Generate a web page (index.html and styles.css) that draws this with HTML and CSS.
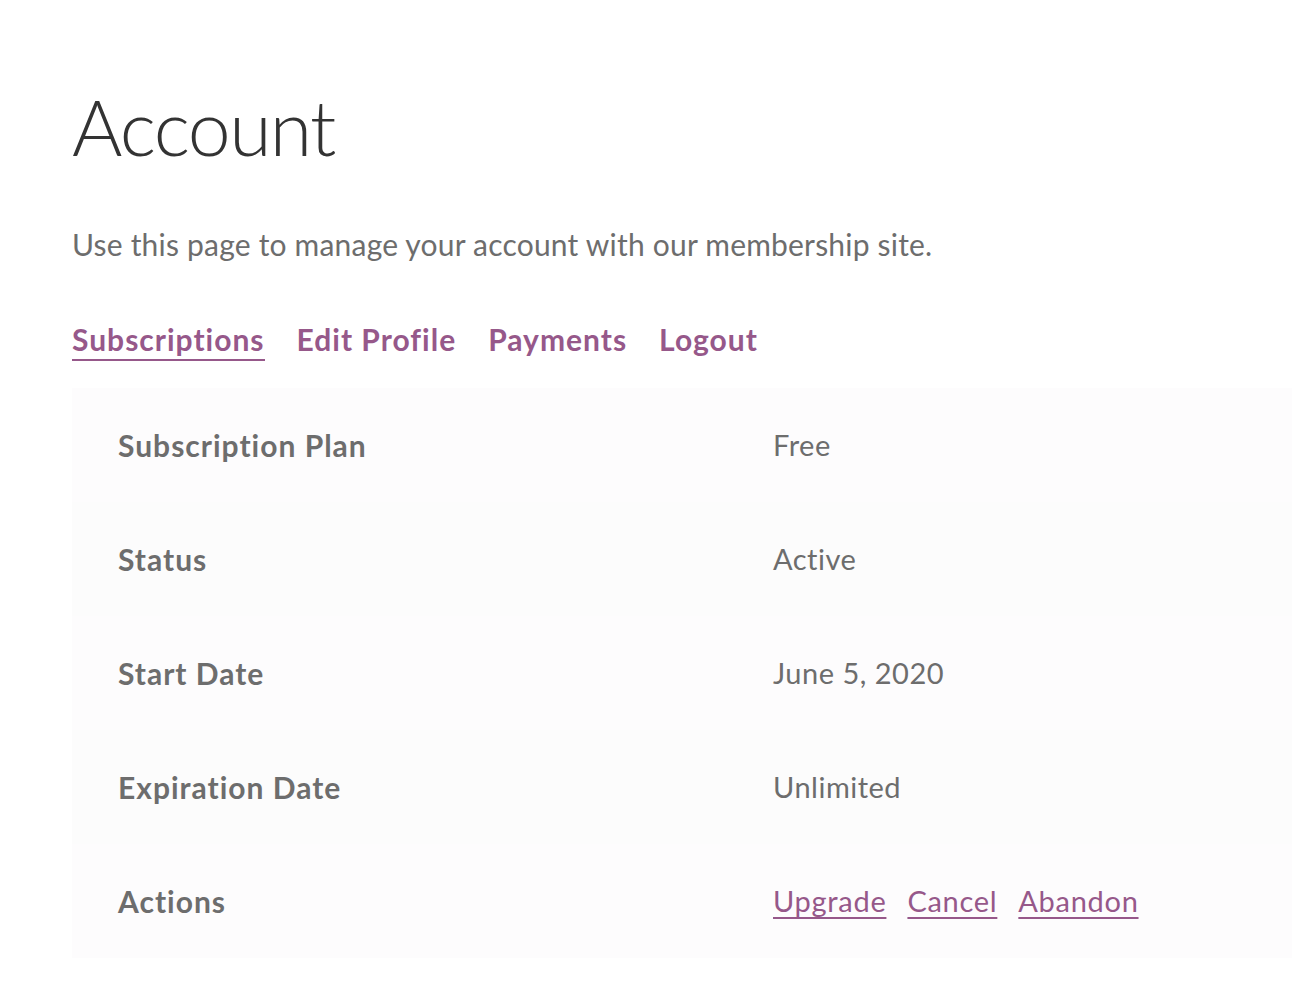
FILE: index.html
```html
<!DOCTYPE html>
<html lang="en">
<head>
<meta charset="utf-8">
<title>Account</title>
<link rel="stylesheet" href="styles.css">
</head>
<body>
<main class="page">
  <h1 class="title">Account</h1>
  <p class="intro">Use this page to manage your account with our membership site.</p>
  <nav class="tabs">
    <a class="tab active" href="#">Subscriptions</a>
    <a class="tab" href="#">Edit Profile</a>
    <a class="tab" href="#">Payments</a>
    <a class="tab" href="#">Logout</a>
  </nav>
  <table class="subs">
    <colgroup><col class="col-label"><col class="col-value"></colgroup>
    <tbody>
      <tr><th>Subscription Plan</th><td>Free</td></tr>
      <tr><th>Status</th><td>Active</td></tr>
      <tr><th>Start Date</th><td>June 5, 2020</td></tr>
      <tr><th>Expiration Date</th><td>Unlimited</td></tr>
      <tr><th>Actions</th><td class="actions"><a href="#">Upgrade</a><a href="#">Cancel</a><a href="#">Abandon</a></td></tr>
    </tbody>
  </table>
</main>
</body>
</html>
```

FILE: styles.css
```css
html, body {
  margin: 0;
  padding: 0;
  background: #ffffff;
  overflow-x: hidden;
}
body {
  font-family: Lato, "Liberation Sans", sans-serif;
  color: #6d6d6d;
}
.page {
  padding: 82px 0 0 72px;
}
.title {
  margin: 0;
  font-size: 77px;
  font-weight: 300;
  line-height: 88px;
  color: #333333;
  letter-spacing: -1.6px;
}
.intro {
  margin: 54px 0 0;
  font-size: 30px;
  line-height: 40px;
  letter-spacing: 0.2px;
  color: #6d6d6d;
}
.tabs {
  display: flex;
  gap: 32px;
  margin-top: 55px;
}
.tab {
  font-size: 30px;
  font-weight: 700;
  line-height: 40px;
  letter-spacing: 1px;
  color: #96588a;
  text-decoration: none;
  padding-bottom: 0;
  border-bottom: 2px solid transparent;
}
.tab.active {
  border-bottom-color: #96588a;
}
.subs {
  margin-top: 27px;
  width: 1220px;
  border-collapse: collapse;
  table-layout: fixed;
}
.col-label {
  width: 655px;
}
.col-value {
  width: 565px;
}
.subs tr {
  height: 114px;
  background: #fdfcfd;
}
.subs tr:nth-child(even) {
  background: #fcfcfc;
}
.subs th, .subs td {
  padding: 0 46px;
  line-height: 40px;
  text-align: left;
  vertical-align: middle;
  color: #6d6d6d;
}
.subs th {
  font-size: 30px;
  font-weight: 700;
  letter-spacing: 1px;
}
.subs td {
  font-size: 29px;
  font-weight: 400;
  letter-spacing: 0.5px;
}
.actions {
  white-space: nowrap;
}
.actions a {
  color: #96588a;
  text-decoration: underline;
  text-underline-offset: 5px;
  text-decoration-thickness: 2px;
  letter-spacing: 0.7px;
  margin-right: 21px;
}
```
